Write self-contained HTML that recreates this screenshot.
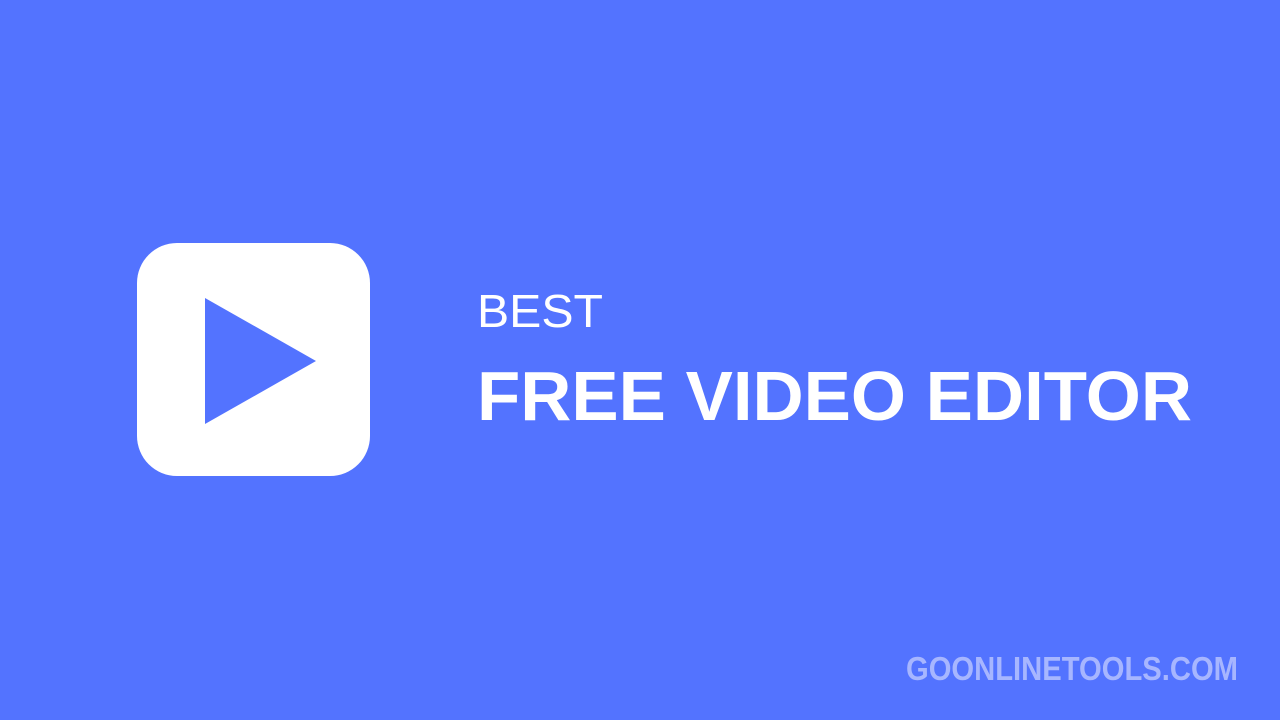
<!DOCTYPE html>
<html><head><style>
html,body{margin:0;padding:0;width:1280px;height:720px;overflow:hidden;background:#5373FF;}
</style></head><body>
<svg width="1280" height="720" viewBox="0 0 1280 720" style="position:absolute;left:0;top:0">
<rect x="0" y="0" width="1280" height="720" fill="#5373FF"/>
<rect x="137" y="243" width="233" height="233" rx="40" fill="#fff"/>
<polygon points="205,298 316,361 205,424" fill="#5373FF"/>
<text x="477" y="327" font-family="Liberation Sans, sans-serif" font-size="46" font-weight="300" fill="#fff" textLength="126" lengthAdjust="spacingAndGlyphs">BEST</text>
<text x="477" y="420" font-family="Liberation Sans, sans-serif" font-size="70" font-weight="700" fill="#fff" textLength="715" lengthAdjust="spacingAndGlyphs">FREE VIDEO EDITOR</text>
<text x="906" y="680" font-family="Liberation Sans, sans-serif" font-size="30" font-weight="700" fill="#A7B6FF" textLength="332" lengthAdjust="spacingAndGlyphs" transform="translate(0,680) scale(1,1.1) translate(0,-680)">GOONLINETOOLS.COM</text>
</svg>
</body></html>
